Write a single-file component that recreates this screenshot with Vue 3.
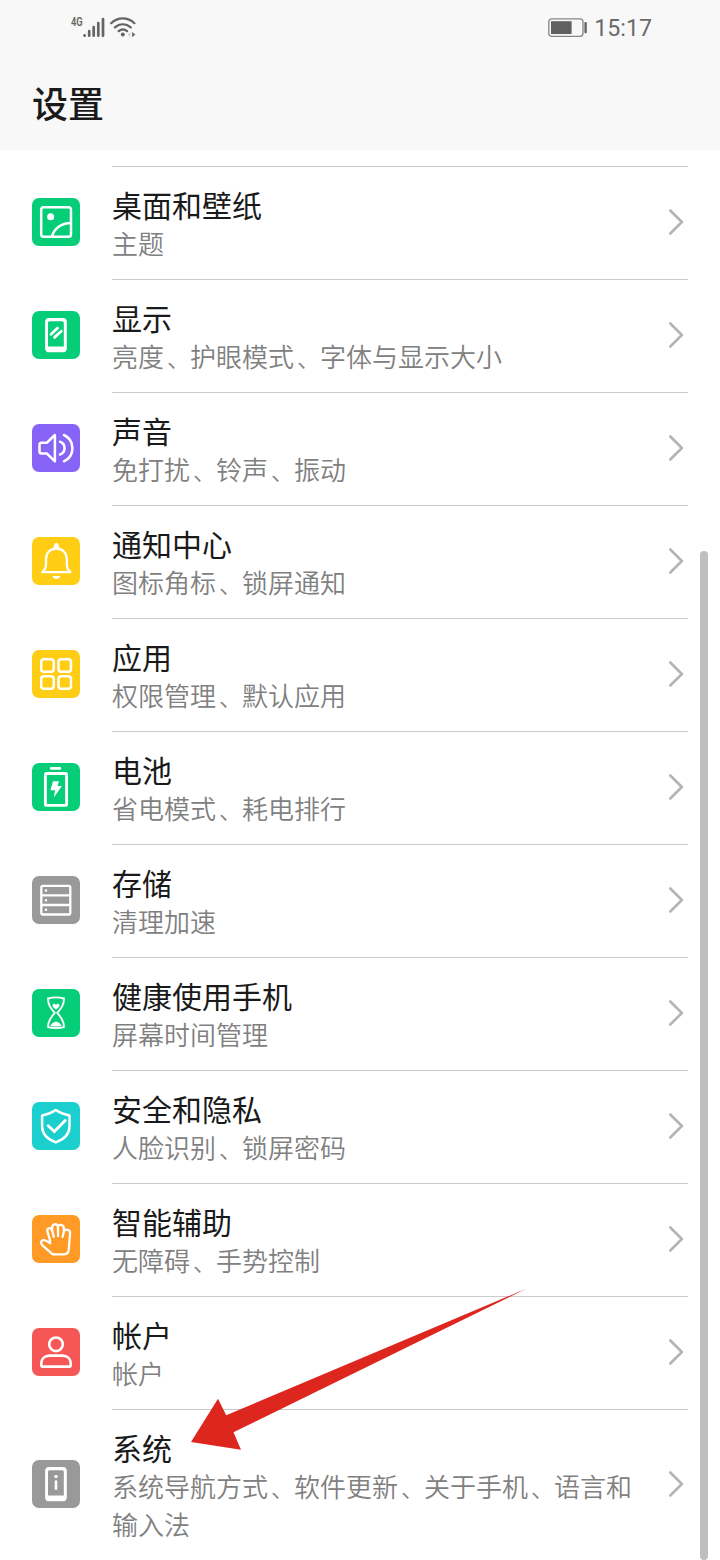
<script setup>
const rows = [
  { icon: 'wallpaper', color: '#06cd78', title: '桌面和壁纸', sub: '主题' },
  { icon: 'display', color: '#06cd78', title: '显示', sub: '亮度、护眼模式、字体与显示大小' },
  { icon: 'sound', color: '#8864f6', title: '声音', sub: '免打扰、铃声、振动' },
  { icon: 'bell', color: '#ffce14', title: '通知中心', sub: '图标角标、锁屏通知' },
  { icon: 'apps', color: '#ffce14', title: '应用', sub: '权限管理、默认应用' },
  { icon: 'battery', color: '#06cd78', title: '电池', sub: '省电模式、耗电排行' },
  { icon: 'storage', color: '#999999', title: '存储', sub: '清理加速' },
  { icon: 'hourglass', color: '#06cd78', title: '健康使用手机', sub: '屏幕时间管理' },
  { icon: 'shield', color: '#1bcfcf', title: '安全和隐私', sub: '人脸识别、锁屏密码' },
  { icon: 'hand', color: '#ff9a26', title: '智能辅助', sub: '无障碍、手势控制' },
  { icon: 'account', color: '#f55656', title: '帐户', sub: '帐户' },
  { icon: 'system', color: '#999999', title: '系统', sub: '系统导航方式、软件更新、关于手机、语言和输入法' },
]

const pieces = (text) => text.split(/(、)/)
</script>

<template>
  <div class="screen">
    <header class="header">
      <div class="status">
        <div class="signals">
          <span class="net">4G</span>
          <svg class="bars" width="22" height="22" viewBox="0 0 22 22" fill="none" stroke="#646464" stroke-width="2.7" stroke-linecap="round">
            <path d="M1.6 19.4v.3M6.2 15.2v4.5M10.7 11.2v8.5M15.3 7.2v12.5M20 3.2v16.5" />
          </svg>
          <svg class="wifi" width="26" height="22" viewBox="0 0 26 22" fill="none" stroke="#646464" stroke-width="2.2" stroke-linecap="round">
            <path d="M1.2 7.2C8 .8 17.6.8 24.4 7.2M4.9 11.4c4.6-4.2 11.2-4.2 15.8 0M8.7 15.2c2.5-2.2 5.9-2.2 8.4 0" />
            <circle cx="12.8" cy="18.6" r="2" fill="#646464" stroke="none" />
            <path d="M20.4 16.2v4.8l-3-2.4z" fill="#d2d2d2" stroke="none" />
            <path d="M22.2 16v5.2l3.1-2.6z" fill="#646464" stroke="none" />
          </svg>
        </div>
        <div class="power">
          <svg width="40" height="20" viewBox="0 0 40 20">
            <rect x=".8" y=".9" width="34.2" height="17.4" rx="3" fill="none" stroke="#858585" stroke-width="1.3" />
            <rect x="3" y="3.2" width="20.6" height="12.8" fill="#606060" />
            <rect x="36.4" y="4" width="2.4" height="11.2" rx=".9" fill="#646464" />
          </svg>
          <span class="time">15:17</span>
        </div>
      </div>
      <h1 class="heading">设置</h1>
    </header>

    <main class="list">
      <div v-for="row in rows" :key="row.title" class="row">
        <div class="tile" :style="{ backgroundColor: row.color }">
          <svg width="48" height="48" viewBox="0 0 48 48" fill="none" stroke="#fff" stroke-width="2.5" stroke-linecap="round" stroke-linejoin="round">
            <g v-if="row.icon === 'wallpaper'">
              <rect x="9.2" y="9.2" width="29.8" height="29.6" rx="2.6" />
              <circle cx="18.6" cy="18.7" r="3.5" fill="#fff" stroke="none" />
              <path d="M20 38.3C22.2 30.6 29.4 25 38.8 24.9" />
            </g>
            <g v-else-if="row.icon === 'display' || row.icon === 'system'">
              <path d="M17 7h14c2.4 0 3.8 1.5 3.8 3.8v26.6c0 2.4-1.4 3.9-3.8 3.9H17c-2.4 0-3.9-1.5-3.9-3.9V10.8C13.1 8.5 14.6 7 17 7zm.8 3.2c-1.2 0-1.8.7-1.8 1.8v23.6h15.8V12c0-1.1-.6-1.8-1.7-1.8z" fill="#fff" fill-rule="evenodd" stroke="none" />
              <path v-if="row.icon === 'display'" d="M19.1 23.2l6.5-6.1M22.5 26.4l6.7-6.2" stroke-width="2.8" />
              <g v-else>
                <circle cx="24" cy="16.5" r="1.7" fill="#fff" stroke="none" />
                <path d="M24 21.5v7.3" stroke-width="2.6" />
              </g>
            </g>
            <path v-else-if="row.icon === 'sound'" d="M9.5 18.8h5.2L22.9 11v26.3l-8.2-7.9H9.5a2 2 0 0 1-2-2v-6.6a2 2 0 0 1 2-2zM28 17.7c6.100 2 6.100 10.800 0 12.800M32 11c11.200 5.300 11.200 21 0 26.300" />
            <g v-else-if="row.icon === 'bell'">
              <path d="M10.400 35.200h28c-2.600-2.200-3.600-4.600-3.600-8.200v-4.800c0-6.400-4.200-10.500-10.400-10.500S14 15.800 14 22.200V27c0 3.600-1 6-3.600 8.200z" stroke-width="2.300" />
              <path d="M21.200 10.900c.4-1.100 1-1.600 1-2.800 0-2.800 4.400-2.800 4.400 0 0 1.200.6 1.700 1 2.800z" fill="#fff" stroke="none" />
              <path d="M20.600 39h7.600c-.6 3.900-7 3.900-7.600 0z" fill="#fff" stroke="none" />
            </g>
            <g v-else-if="row.icon === 'apps'">
              <rect x="9.200" y="9.200" width="12.500" height="12.500" rx="2.800" />
              <rect x="26.500" y="9.200" width="12.500" height="12.500" rx="2.800" />
              <rect x="9.200" y="26.300" width="12.500" height="12.500" rx="2.800" />
              <rect x="26.500" y="26.300" width="12.500" height="12.500" rx="2.800" />
            </g>
            <g v-else-if="row.icon === 'battery'">
              <rect x="18" y="4" width="11.200" height="2.800" rx="1" fill="#fff" stroke="none" />
              <rect x="13.400" y="10.500" width="21.200" height="31.900" rx="1.200" stroke-width="2.900" />
              <path d="M21 18.200h6l-1.500 4.800h4.400L21.800 34.400l1.300-7.200h-4.700z" fill="#fff" stroke="none" />
            </g>
            <g v-else-if="row.icon === 'storage'">
              <path d="M11 9.800h25.600a1.700 1.700 0 0 1 1.700 1.700v25.300a1.700 1.700 0 0 1-1.700 1.700H11a1.700 1.700 0 0 1-1.700-1.700V11.500A1.700 1.700 0 0 1 11 9.800zM9.400 19.300h28.800M9.400 29h28.800" stroke-width="2.300" />
              <path d="M14 14.600v.01M14 24.200v.01M14 33.800v.01" stroke-width="2.500" />
            </g>
            <g v-else-if="row.icon === 'hourglass'">
              <path d="M16 9.500c5-1.400 11-1.400 16 0-.1 6.300-2.200 9.300-6.800 14.300 4.600 5 6.700 8.300 6.800 14.300-5 1.200-11 1.200-16 0 .1-6 2.200-9.300 6.800-14.300-4.600-5-6.700-8-6.800-14.300z" stroke-width="1.900" />
              <path d="M24 20.600c-3.100-2.300-4-3.700-3.200-5.100.9-1.400 2.600-.6 3.200.4.600-1 2.300-1.800 3.200-.4.800 1.400-.1 2.800-3.200 5.100z" fill="#fff" stroke="none" />
              <path d="M18.400 36.900c1.100-2.500 3-3.800 5.600-4.500 2.600.7 4.500 2 5.600 4.500-3.600.7-7.600.7-11.200 0z" fill="#fff" stroke="none" />
            </g>
            <g v-else-if="row.icon === 'shield'">
              <path d="M23.800 8c4 2.800 8.400 4.500 13.700 5.400v10.900c0 8.200-5.500 13.100-13.700 16.100-8.200-3-13.700-7.900-13.700-16.100V13.400c5.300-.9 9.700-2.600 13.700-5.400z" />
              <path d="M16.200 23.800l6.200 5.700 10.800-11" stroke-width="2.900" stroke-linejoin="miter" />
            </g>
            <g v-else-if="row.icon === 'hand'" stroke-width="2.300">
              <path d="M20.800 39.300L10.400 30.400c-1.900-2.100-1.600-4.500.2-5.200 2.100-.7 5 1 7.600 3.100.2-2.200-.3-4.200-1.400-7.200l-1.400-4.700c-.8-3.200 2.900-4.500 4.300-1.700l.5 1.200-.1-3c-.1-4.200 4.700-4.800 5.800-1.500 1.300-2.500 6-1.900 6 2v3c1.400-2.600 6.500-2.200 6.200 1.600l-1.300 16.400c-.3 3-1.700 4.900-4.600 4.900z" />
              <path d="M20.200 15.900l1.600 6M25.900 11.400l.2 9.600M31.900 16.400l-1.300 5.400" />
            </g>
            <g v-else-if="row.icon === 'account'" stroke-width="2.700">
              <circle cx="24" cy="16.300" r="6.800" />
              <path d="M17.400 27.700h13.200c4.800 0 8.100 3.200 8.100 7.800v2.100c0 .7-.4 1.100-1.100 1.100H10.400c-.7 0-1.100-.4-1.100-1.100v-2.100c0-4.600 3.300-7.800 8.100-7.800z" />
            </g>
          </svg>
        </div>
        <div class="body">
          <div class="text">
            <div class="title">{{ row.title }}</div>
            <div class="sub"><span v-for="(piece, i) in pieces(row.sub)" :key="i" :class="{ comma: piece === '、' }">{{ piece }}</span></div>
          </div>
          <svg class="chevron" width="16" height="28" viewBox="0 0 16 28" fill="none" stroke="#b4b4b4" stroke-width="2.600" stroke-linecap="round" stroke-linejoin="round">
            <path d="M2.300 2.500L13.900 14 2.300 25.500" />
          </svg>
        </div>
      </div>
    </main>

    <div class="scrollbar"></div>
    <svg class="arrow" width="336" height="162" viewBox="190 1288 336 162">
      <path d="M191 1442L218 1398.700l8.200 16.600L526 1288.800 233.500 1432.300l7.500 17.500z" fill="#dc261e" />
    </svg>
  </div>
</template>

<style>
body {
  margin: 0;
  background: #fff;
}
</style>

<style scoped>
.screen {
  position: relative;
  width: 720px;
  height: 1560px;
  overflow: hidden;
  background: #fff;
  font-family: "Noto Sans CJK SC", sans-serif;
}
.header {
  box-sizing: border-box;
  height: 150px;
  background: #f8f8f8;
}
.status {
  display: flex;
  justify-content: space-between;
  height: 56px;
  padding: 0 68px 0 71px;
}
.signals {
  display: flex;
  align-items: flex-start;
  padding-top: 16px;
}
.net {
  width: 12px;
  font: 600 13px/12px Roboto, sans-serif;
  color: #646464;
  transform: scaleX(0.72);
  transform-origin: left;
}
.wifi {
  margin-left: 5px;
}
.power {
  display: flex;
  align-items: center;
  gap: 6px;
}
.time {
  font: 400 23.2px/28px Roboto, sans-serif;
  color: #6a6a6a;
}
.heading {
  margin: 0;
  padding: 20px 32px 0;
  font-size: 36px;
  line-height: 52px;
  font-weight: 500;
  color: #1a1a1a;
}
.list {
  padding: 16px 32px 0;
}
.row {
  display: flex;
  align-items: center;
  gap: 32px;
}
.tile {
  flex: none;
  width: 48px;
  height: 48px;
  margin-bottom: 2px;
  border-radius: 7px;
}
.tile svg {
  display: block;
}
.body {
  box-sizing: border-box;
  flex: 1;
  display: flex;
  align-items: center;
  justify-content: space-between;
  min-height: 113px;
  padding-right: 4px;
  border-top: 1px solid #cacaca;
}
.row:last-child .body {
  min-height: 151px;
}
.text {
  width: 528px;
  padding-top: 2px;
}
.title {
  padding-bottom: 2px;
  font-size: 30px;
  line-height: 36px;
  color: #1a1a1a;
}
.sub {
  font-size: 26px;
  line-height: 38px;
  font-weight: 350;
  color: #808080;
}
.comma {
  display: inline-block;
  margin-left: 3px;
  font-size: 23px;
  line-height: 1;
}
.chevron {
  flex: none;
  margin-bottom: 2px;
}
.scrollbar {
  position: absolute;
  top: 551px;
  left: 700px;
  width: 8px;
  height: 1009px;
  border-radius: 4px;
  background: #bfbfbf;
}
.arrow {
  position: absolute;
  top: 1288px;
  left: 190px;
}
</style>
